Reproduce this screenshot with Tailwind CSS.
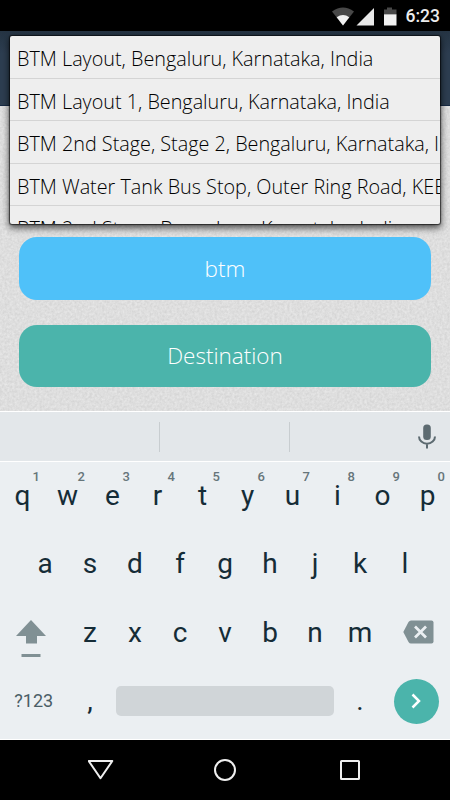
<!DOCTYPE html>
<html lang="en">
<head>
  <meta charset="UTF-8" />
  <meta name="viewport" content="width=device-width, initial-scale=1.0"/>
  <title>Choose route</title>
  <script src="https://cdn.jsdelivr.net/npm/@tailwindcss/browser@4"></script>
</head>
<body class="w-[450px] h-[800px] overflow-hidden flex flex-col bg-black font-['Roboto',sans-serif]">

  <!-- status bar -->
  <header class="h-[31px] shrink-0 bg-black flex items-center justify-end pt-[2px] pr-[10px]">
    <svg class="w-[66px] h-[20px] mr-[8px]" viewBox="0 0 66 20">
      <path d="M0 4.5Q11-3.5 22 4.5L11 18.5Z" fill="#484848"/>
      <path d="M4.7 10.2Q11 5.6 17.3 10.2L11 18.5Z" fill="#f2f2f2"/>
      <path d="M42 1V18.5H24.500Z" fill="#e9e9e9"/>
      <path d="M55 .5h5v2h4.500v5H52v-5h3z" fill="#484848"/>
      <path d="M52 7.300h12.500v11.200H52z" fill="#f2f2f2"/>
    </svg>
    <span class="text-[17.5px] leading-none font-medium text-[#ececec]">6:23</span>
  </header>

  <main class="relative h-[380px] shrink-0 bg-[#dddddd]">
    <!-- paper grain -->
    <svg class="absolute inset-0 w-full h-full">
      <filter id="paper" x="0" y="0" width="100%" height="100%" color-interpolation-filters="sRGB">
        <feTurbulence type="fractalNoise" baseFrequency="0.4" numOctaves="3" seed="4"/>
        <feColorMatrix values="0.11 0 0 0 0.815  0.11 0 0 0 0.815  0.11 0 0 0 0.815  0 0 0 0 1"/>
      </filter>
      <rect width="100%" height="100%" filter="url(#paper)"/>
    </svg>

    <div class="relative h-[75px] bg-[#2b3c4f] bg-linear-to-b from-[#253443] to-[#2d3e51] to-30% border-b border-[#172a44]"></div>

    <div class="relative pt-[131px] px-[19px] flex flex-col gap-[25px] font-['Open_Sans',sans-serif] font-light text-[22.5px] text-white">
      <button class="h-[62.500px] rounded-[18px] bg-[#4fc1f9] pt-px">btm</button>
      <button class="h-[62.500px] rounded-[18px] bg-[#4bb4ab] pt-px">Destination</button>
    </div>

    <!-- suggestions dropdown -->
    <ul class="absolute left-[10px] top-[5px] w-[430px] h-[188px] overflow-hidden rounded-[2px] bg-[#eeeeee] shadow-[0_0_1px_1px_rgba(0,0,0,0.6),0_3px_7px_1px_rgba(0,0,0,0.65)] font-['Open_Sans',sans-serif] font-light text-[19.8px] text-black whitespace-nowrap">
      <li class="h-[42.500px] pl-[7px] pt-[3px] leading-[40px] border-b border-[#d4d4d4]">BTM Layout, Bengaluru, Karnataka, India</li>
      <li class="h-[42.500px] pl-[7px] pt-[3px] leading-[40px] border-b border-[#d4d4d4]">BTM Layout 1, Bengaluru, Karnataka, India</li>
      <li class="h-[42.500px] pl-[7px] pt-[3px] leading-[40px] border-b border-[#d4d4d4]">BTM 2nd Stage, Stage 2, Bengaluru, Karnataka, India</li>
      <li class="h-[42.500px] pl-[7px] pt-[3px] leading-[40px] border-b border-[#d4d4d4]">BTM Water Tank Bus Stop, Outer Ring Road, KEB Colony</li>
      <li class="h-[42.500px] pl-[7px] pt-[3px] leading-[40px]">BTM 2nd Stage, Bengaluru, Karnataka, India</li>
    </ul>
  </main>

  <!-- keyboard -->
  <section class="h-[329px] shrink-0 bg-[#ebeff2] flex flex-col text-[#152c37] text-[28px] border-b border-white">
    <div class="h-[51px] shrink-0 bg-[#e3e7ea] border-t border-b border-t-white border-b-white flex items-center">
      <div class="w-[160px] h-[30px] border-r border-[#c8cdd0]"></div>
      <div class="w-[130px] h-[30px] border-r border-[#c8cdd0]"></div>
      <svg class="w-[18px] h-[25px] ml-[128px]" viewBox="0 0 18 25">
        <rect x="5.200" y=".5" width="7.600" height="15.500" rx="3.500" fill="#5d6b71"/>
        <path d="M1 12.500a8 7.200 0 0 0 16 0M9 19.700V24.500" fill="none" stroke="#5d6b71" stroke-width="2"/>
      </svg>
    </div>

    <div class="h-[68px] grid grid-cols-10 text-center leading-[67px]" id="topRow"></div>
    <div class="h-[69px] px-[22.500px] grid grid-cols-9 text-center leading-[68px]">
      <span>a</span><span>s</span><span>d</span><span>f</span><span>g</span><span>h</span><span>j</span><span>k</span><span>l</span>
    </div>

    <div class="h-[68px] flex items-center text-center leading-[68px]">
      <div class="w-[67.500px] pl-[16px] text-left">
        <svg class="w-[30px] h-[38px] mt-[12px]" viewBox="0 0 30 38">
          <path d="M15 0L30 16H21V23.500H10V16H0Z" fill="#809094"/>
          <path d="M5.500 34h19v3h-19z" fill="#809094"/>
        </svg>
      </div>
      <div class="w-[315px] grid grid-cols-7">
        <span>z</span><span>x</span><span>c</span><span>v</span><span>b</span><span>n</span><span>m</span>
      </div>
      <svg class="w-[31px] h-[24px] ml-[20.5px] -mt-[2px]" viewBox="0 0 31 24">
        <path d="M8 .5H28.500Q30.500.5 30.500 2.500V21.500Q30.500 23.500 28.500 23.500H8Q6.500 23.500 5.500 22L.3 12L5.500 2Q6.500.5 8 .5Z" fill="#809094"/>
        <path d="M12 6.500L23 17.500M23 6.500L12 17.500" stroke="#ebeff2" stroke-width="2.700"/>
      </svg>
    </div>

    <div class="h-[68px] flex items-center leading-[68px]">
      <span class="w-[67.500px] text-center text-[18px] text-[#4a5d66]">?123</span>
      <span class="w-[45px] text-center">,</span>
      <div class="w-[218px] h-[30px] ml-[3.500px] rounded-[5px] bg-[#d0d5d8]"></div>
      <span class="w-[45px] ml-[3.500px] text-center">.</span>
      <button class="w-[45px] h-[45px] ml-[11px] rounded-full bg-[#4bb4ab] flex items-center justify-center">
        <svg class="w-[10px] h-[16px]" viewBox="0 0 10 16">
          <path d="M1.500 1.500L8 8L1.500 14.500" fill="none" stroke="#fff" stroke-width="2.500"/>
        </svg>
      </button>
    </div>
  </section>

  <!-- navigation bar -->
  <footer class="h-[60px] shrink-0 bg-black flex items-center justify-center">
    <svg class="w-[274px] h-[24px]" viewBox="0 0 274 24" fill="none" stroke="#efefef" stroke-width="2">
      <path d="M.7 3H24.300L12.500 20.300Z" stroke-linejoin="round"/>
      <circle cx="137" cy="12" r="10"/>
      <rect x="253" y="3" width="18" height="18" rx=".5"/>
    </svg>
  </footer>

<script>
  const topRow = document.getElementById("topRow");

  "qwertyuiop".split("").forEach((letter, index) => {
    const key = document.createElement("span");
    key.className = "relative";
    key.innerHTML = `${letter}<sup class="absolute right-[5px] top-[8px] text-[13px] leading-[14px] font-medium text-[#66757a]">${(index + 1) % 10}</sup>`;
    topRow.appendChild(key);
  });
</script>

</body>
</html>
